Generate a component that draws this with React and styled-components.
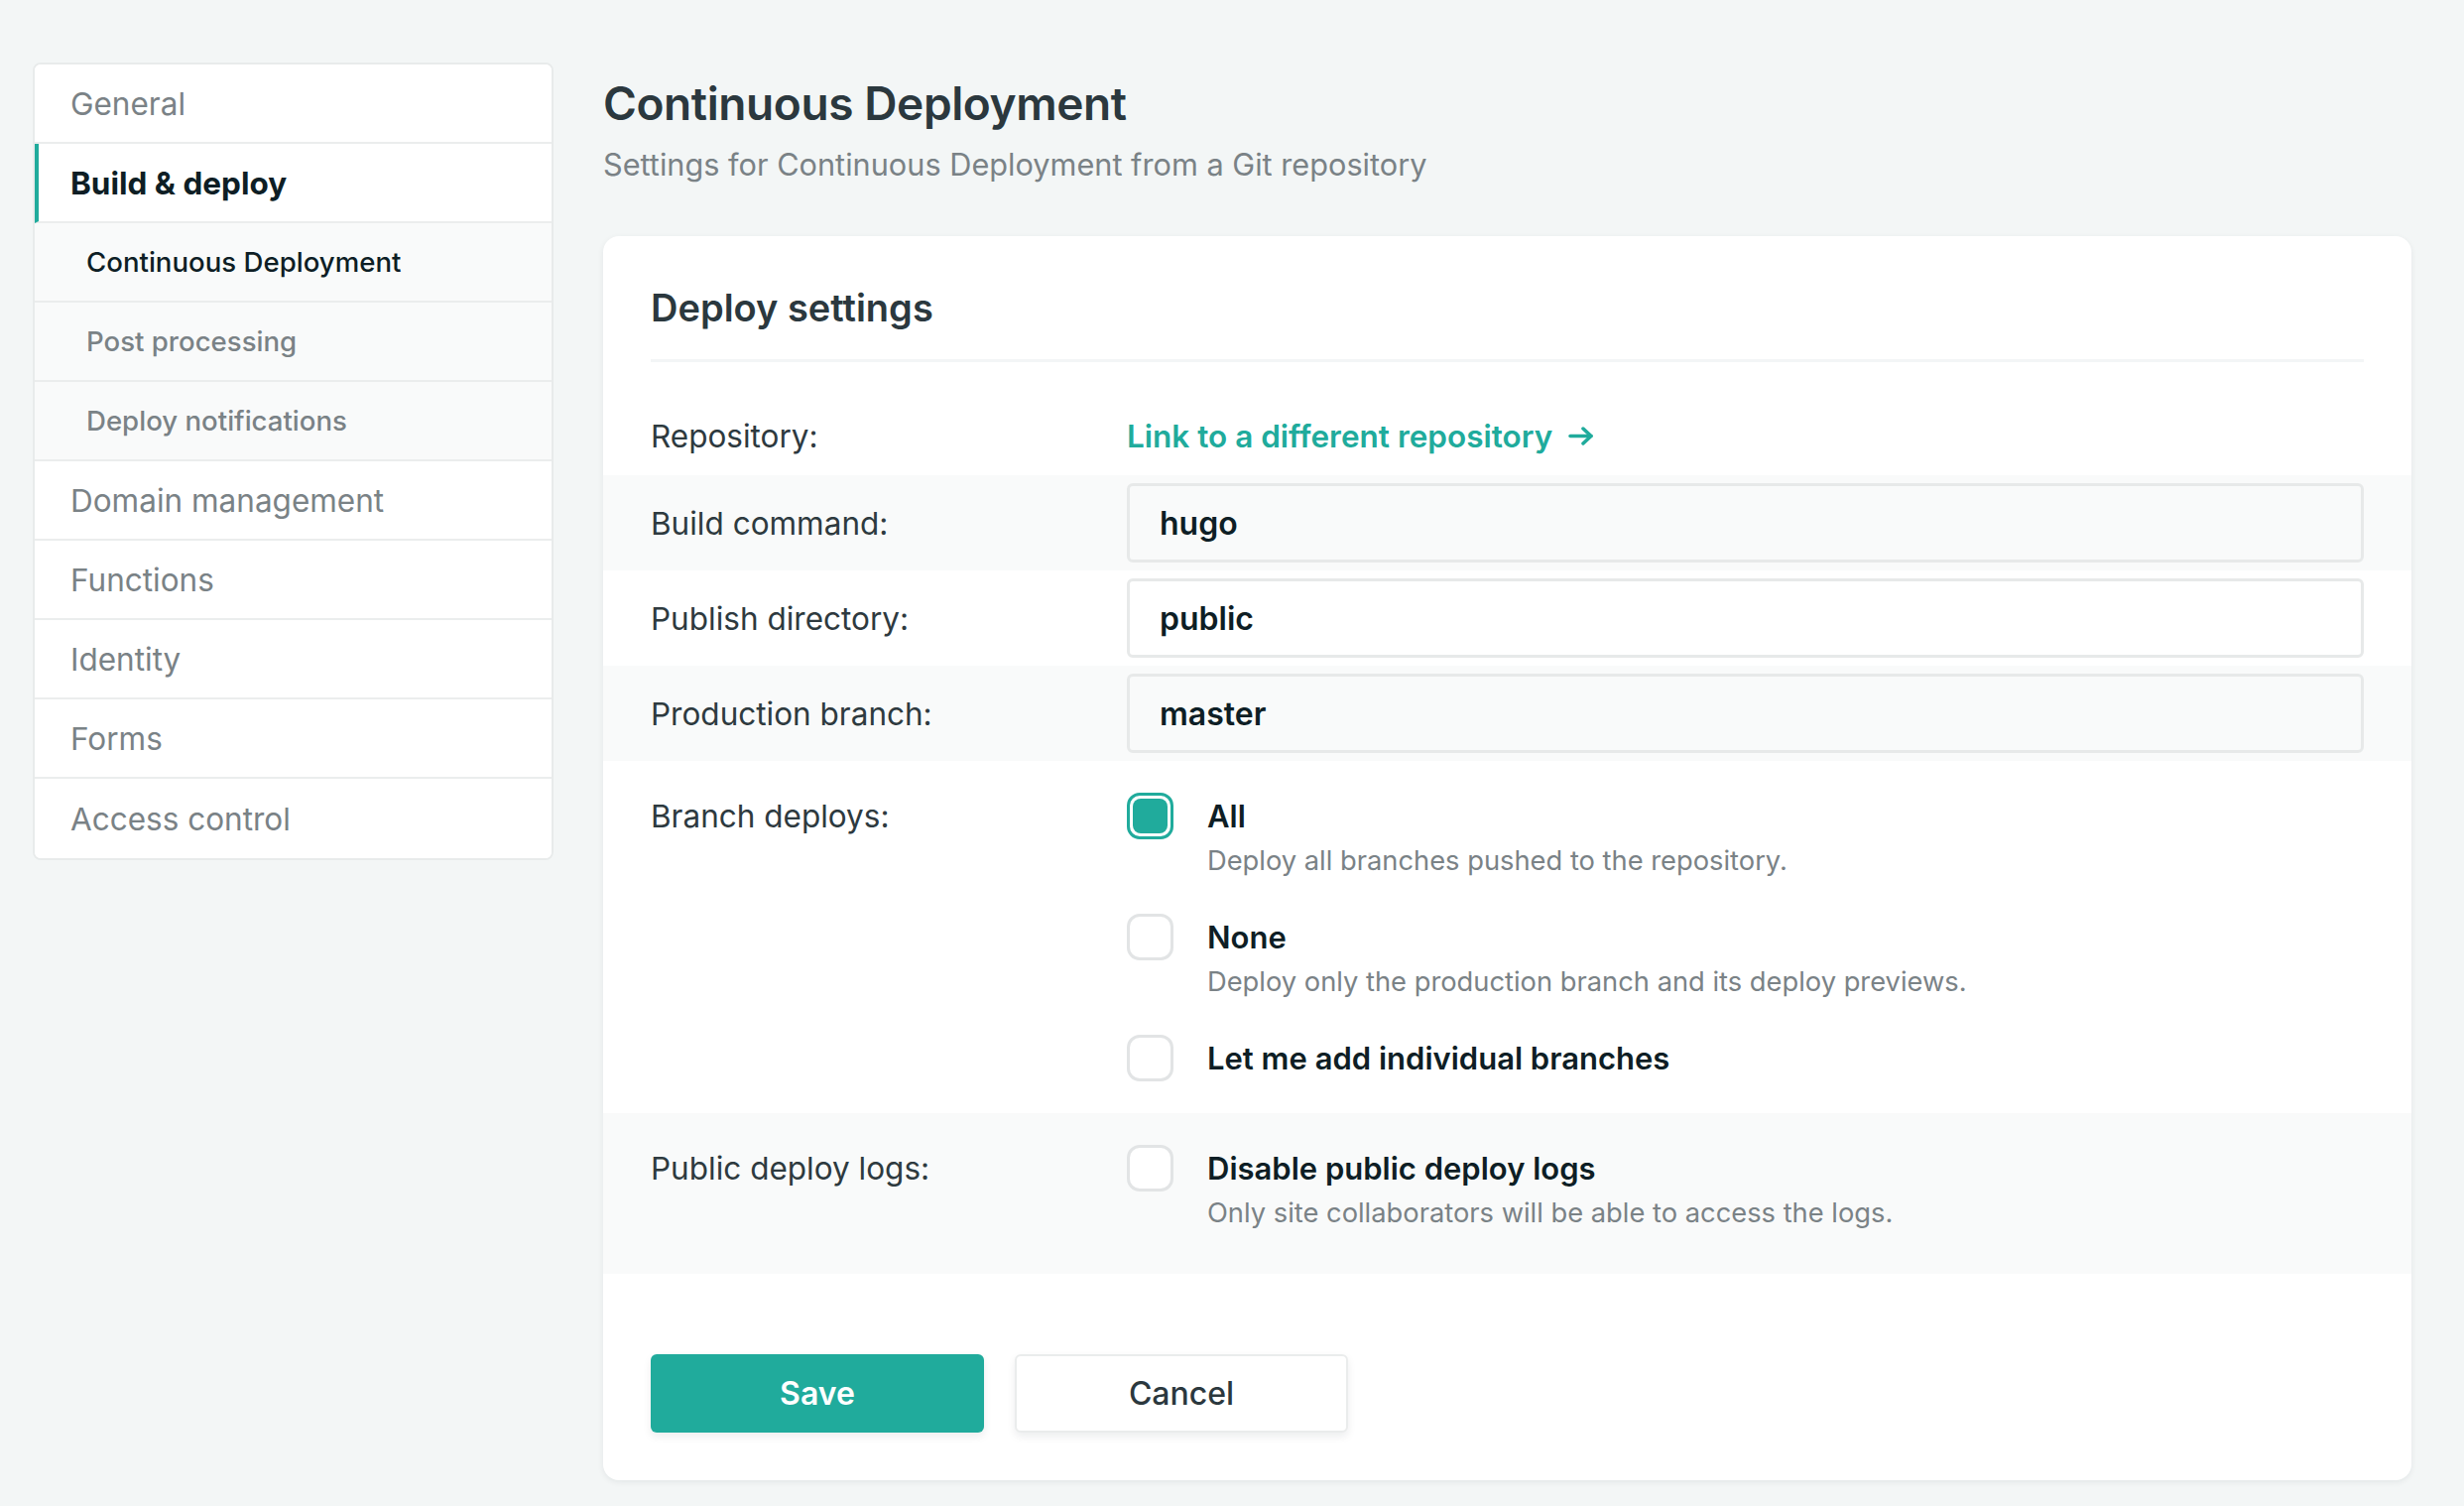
import React from "react";
import styled, { createGlobalStyle } from "styled-components";

const teal = "#20ab9c";

const GlobalStyle = createGlobalStyle`
  * { box-sizing: border-box; }
  body {
    margin: 0;
    background: #f3f6f6;
    font-family: Inter, "Liberation Sans", sans-serif;
    color: #2e3a3f;
  }
`;

const Page = styled.div`
  display: flex;
  align-items: flex-start;
  gap: 50px;
  padding: 63px 53px 26px 33px;
`;

const Sidebar = styled.nav`
  width: 525px;
  flex-shrink: 0;
  background: #fff;
  border: 2px solid #e8ebeb;
  border-radius: 8px;
  overflow: hidden;
`;

const NavItem = styled.a`
  display: flex;
  align-items: center;
  height: 80px;
  padding-left: ${(p) => (p.$sub ? "52px" : p.$active ? "32px" : "36px")};
  border-bottom: 2px solid #ebeded;
  border-left: ${(p) => (p.$active ? `4px solid ${teal}` : "none")};
  background: ${(p) => (p.$sub ? "#f9fafa" : "#fff")};
  font-size: ${(p) => (p.$sub ? "27.6px" : "31.5px")};
  font-weight: ${(p) => (p.$active ? 700 : p.$sub ? 500 : 400)};
  color: ${(p) => (p.$active || p.$current ? "#0e1e25" : "#7a8286")};
  text-decoration: none;
  &:last-child { border-bottom: none; }
`;

const Main = styled.main`
  flex: 1;
  min-width: 0;
`;

const Title = styled.h1`
  margin: 12px 0 0;
  font-size: 46px;
  line-height: 58px;
  letter-spacing: -0.4px;
  font-weight: 600;
  color: #2b383e;
`;

const Subtitle = styled.p`
  margin: 10px 0 0;
  font-size: 30.7px;
  line-height: 45px;
  color: #7a8286;
`;

const Card = styled.section`
  margin-top: 50px;
  background: #fff;
  border-radius: 16px;
  box-shadow: 0 2px 6px rgba(14, 30, 37, 0.07);
  padding: 49px 0 48px;
`;

const CardHeading = styled.h2`
  margin: 0 48px;
  padding-bottom: 29px;
  border-bottom: 3px solid #f3f5f6;
  font-size: 38px;
  line-height: 46px;
  font-weight: 600;
  color: #2b383e;
`;

const Row = styled.div`
  display: grid;
  grid-template-columns: 480px 1fr;
  align-items: center;
  min-height: 96px;
  padding: 0 48px;
  background: ${(p) => (p.$shade ? "#f9fafa" : "transparent")};
`;

const RepoRow = styled(Row)`
  min-height: 114px;
  padding-top: 34px;
`;

const StackRow = styled(Row)`
  align-items: start;
  padding-top: 32px;
  padding-bottom: ${(p) => p.$bottom || "32px"};
`;

const Label = styled.div`
  font-size: 31.5px;
  line-height: 47px;
  color: #2e3a3f;
`;

const RepoLink = styled.a`
  display: inline-flex;
  align-items: center;
  gap: 16px;
  font-size: 31.5px;
  font-weight: 600;
  color: ${teal};
  text-decoration: none;
`;

const Input = styled.input`
  width: 100%;
  height: 80px;
  padding: 0 30px;
  border: 3px solid #e7e9e9;
  border-radius: 6px;
  background: transparent;
  font-family: inherit;
  font-size: 32px;
  font-weight: 600;
  color: #0e1e25;
  outline: none;
`;

const Options = styled.div`
  display: flex;
  flex-direction: column;
  gap: 32px;
`;

const Option = styled.label`
  display: grid;
  grid-template-columns: 47px 1fr;
  column-gap: 34px;
`;

const Box = styled.span`
  position: relative;
  width: 47px;
  height: 47px;
  border-radius: 13px;
  border: 3px solid ${(p) => (p.$checked ? teal : "#e2e4e5")};
  background: #fff;
  &::after {
    content: "";
    display: ${(p) => (p.$checked ? "block" : "none")};
    position: absolute;
    inset: 3px;
    border-radius: 8px;
    background: ${teal};
  }
`;

const OptionTitle = styled.div`
  font-size: 31px;
  line-height: 47px;
  font-weight: 600;
  color: #0e1e25;
`;

const OptionHint = styled.div`
  grid-column: 2;
  font-size: 27.3px;
  line-height: 43px;
  color: #7a8286;
`;

const Actions = styled.div`
  display: flex;
  gap: 31px;
  padding: 81px 48px 0;
`;

const Button = styled.button`
  width: 336px;
  height: 79px;
  border-radius: 6px;
  font-family: inherit;
  font-size: 32px;
  font-weight: ${(p) => (p.$primary ? 600 : 500)};
  color: ${(p) => (p.$primary ? "#fff" : "#2b383e")};
  background: ${(p) => (p.$primary ? teal : "#fff")};
  border: ${(p) => (p.$primary ? "none" : "2px solid #eaecec")};
  box-shadow: 0 4px 8px rgba(14, 30, 37, 0.08);
  cursor: pointer;
`;

const Arrow = () => (
  <svg width="26" height="19" viewBox="0 0 26 19" fill="none" stroke={teal} strokeWidth="3.5" strokeLinecap="round" strokeLinejoin="round">
    <path d="M2 9.5h21" />
    <path d="M15 2l8 7.5-8 7.5" />
  </svg>
);

const navItems = [
  { label: "General" },
  { label: "Build & deploy", active: true },
  { label: "Continuous Deployment", sub: true, current: true },
  { label: "Post processing", sub: true },
  { label: "Deploy notifications", sub: true },
  { label: "Domain management" },
  { label: "Functions" },
  { label: "Identity" },
  { label: "Forms" },
  { label: "Access control" },
];

const fields = [
  { label: "Build command:", value: "hugo", shade: true },
  { label: "Publish directory:", value: "public" },
  { label: "Production branch:", value: "master", shade: true },
];

const branchOptions = [
  { title: "All", hint: "Deploy all branches pushed to the repository.", checked: true },
  { title: "None", hint: "Deploy only the production branch and its deploy previews." },
  { title: "Let me add individual branches" },
];

export default function App() {
  return (
    <>
      <GlobalStyle />
      <Page>
        <Sidebar>
          {navItems.map((item) => (
            <NavItem key={item.label} href="#" $active={item.active} $sub={item.sub} $current={item.current}>
              {item.label}
            </NavItem>
          ))}
        </Sidebar>
        <Main>
          <Title>Continuous Deployment</Title>
          <Subtitle>Settings for Continuous Deployment from a Git repository</Subtitle>
          <Card>
            <CardHeading>Deploy settings</CardHeading>
            <RepoRow>
              <Label>Repository:</Label>
              <div>
                <RepoLink href="#">
                  Link to a different repository <Arrow />
                </RepoLink>
              </div>
            </RepoRow>
            {fields.map((f) => (
              <Row key={f.label} $shade={f.shade}>
                <Label>{f.label}</Label>
                <Input defaultValue={f.value} />
              </Row>
            ))}
            <StackRow>
              <Label>Branch deploys:</Label>
              <Options>
                {branchOptions.map((o) => (
                  <Option key={o.title}>
                    <Box $checked={o.checked} />
                    <OptionTitle>{o.title}</OptionTitle>
                    {o.hint && <OptionHint>{o.hint}</OptionHint>}
                  </Option>
                ))}
              </Options>
            </StackRow>
            <StackRow $shade $bottom="40px">
              <Label>Public deploy logs:</Label>
              <Option>
                <Box />
                <OptionTitle>Disable public deploy logs</OptionTitle>
                <OptionHint>Only site collaborators will be able to access the logs.</OptionHint>
              </Option>
            </StackRow>
            <Actions>
              <Button $primary>Save</Button>
              <Button>Cancel</Button>
            </Actions>
          </Card>
        </Main>
      </Page>
    </>
  );
}
